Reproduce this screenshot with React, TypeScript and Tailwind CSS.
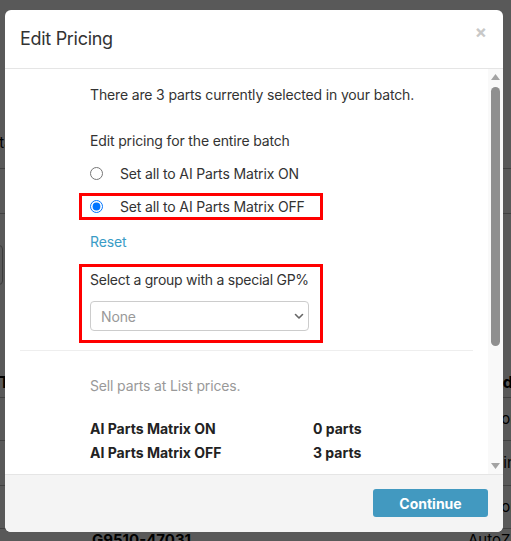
import React from "react";

const font = { fontFamily: "Inter, 'Noto Sans', sans-serif" };

function Background() {
  return (
    <div className="absolute inset-0 bg-white text-black" style={font}>
      <div className="h-[132px]" />
      <div className="h-[24px] text-[15px] -ml-[62px]">Show data</div>
      <div className="h-[12px]" />
      <div className="border-t border-[#bbb] h-[45px]" />
      <div className="border-t border-[#bbb] h-[32px]" />
      <div className="h-[40px] w-[60px] -ml-[57px] border border-[#aaa] rounded" />
      <div className="h-[81px]" />
      <div className="flex h-[31px] items-center font-bold text-[16px] whitespace-nowrap">
        <div className="-ml-[1px] w-[482px] shrink-0">Title</div>
        <div className="shrink-0">Code</div>
      </div>
      <div className="border-t border-[#bbb] h-[43px] flex items-center text-[15px] whitespace-nowrap">
        <div className="ml-[493px] shrink-0">Ford</div>
      </div>
      <div className="border-t border-[#bbb] h-[45px] flex items-center text-[15px] whitespace-nowrap">
        <div className="ml-[493px] shrink-0">Kinetic</div>
      </div>
      <div className="border-t border-[#bbb] h-[43px] flex items-center text-[15px] whitespace-nowrap">
        <div className="ml-[493px] shrink-0">Ford</div>
      </div>
      <div className="border-t border-[#bbb] h-[43px] flex items-start text-[15px] whitespace-nowrap">
        <div className="ml-[92px] font-bold w-[376px] shrink-0 leading-[20px] mt-[1px]">G9510-47031</div>
        <div className="leading-[20px] mt-[1px] shrink-0">AutoZone</div>
      </div>
    </div>
  );
}

function Chevron() {
  return (
    <svg width="10" height="7" viewBox="0 0 10 7" fill="none">
      <path d="M1.5 1.5 L5 5 L8.5 1.5" stroke="#666" strokeWidth="1.6" strokeLinecap="round" strokeLinejoin="round" />
    </svg>
  );
}

function Scrollbar() {
  return (
    <div className="w-[15px] shrink-0 bg-[#f9f9f9] flex flex-col items-center">
      <div className="h-[16px] flex items-center justify-center">
        <svg width="9" height="6" viewBox="0 0 9 6"><path d="M0 6 L4.5 0 L9 6 Z" fill="#a3a3a3" /></svg>
      </div>
      <div className="mt-[2px] w-[9px] h-[259px] rounded-full bg-[#8f8f8f]" />
      <div className="flex-1" />
      <div className="h-[16px] flex items-center justify-center">
        <svg width="9" height="6" viewBox="0 0 9 6"><path d="M0 0 L9 0 L4.5 6 Z" fill="#a3a3a3" /></svg>
      </div>
    </div>
  );
}

export default function App() {
  return (
    <div className="relative w-[511px] h-[541px] overflow-hidden" style={font}>
      <Background />
      <div className="absolute inset-0 bg-black/65" />
      <div className="absolute left-[5px] top-[10px] w-[498px] h-[522px] bg-white rounded-[6px] flex flex-col overflow-hidden text-[#333]">
        <div className="h-[59px] shrink-0 border-b border-[#e5e5e5] flex items-start justify-between pl-[15px] pr-[16px]">
          <div className="text-[18px] mt-[15px] text-[#333] tracking-[-0.3px]">Edit Pricing</div>
          <div className="mt-[13px] text-[#c8c8c8] text-[18px] font-bold leading-none">×</div>
        </div>
        <div className="flex-1 flex min-h-0">
          <div className="flex-1 overflow-hidden text-[14px]">
            <div className="px-[15px]">
              <div className="pl-[70px] pt-[16px] tracking-[-0.15px]">
                <div className="h-[20px] leading-[20px]">There are 3 parts currently selected in your batch.</div>
                <div className="h-[26px]" />
                <div className="h-[20px] leading-[20px]">Edit pricing for the entire batch</div>
                <div className="h-[22px] mt-[11px] flex items-center gap-[17px]">
                  <input type="radio" name="m" className="m-0 w-[13px] h-[13px]" />
                  <span>Set all to AI Parts Matrix ON</span>
                </div>
                <div className="mt-[9px] -ml-[11px] w-[244px] h-[27px] border-[3px] border-[#ff0000] flex items-center gap-[17px] pl-[8px]">
                  <input type="radio" name="m" defaultChecked className="m-0 w-[13px] h-[13px]" />
                  <span>Set all to AI Parts Matrix OFF</span>
                </div>
                <div className="mt-[12px] h-[20px] leading-[20px] text-[#3a9cc6]">Reset</div>
                <div className="mt-[12px] -ml-[11px] w-[244px] h-[79px] border-[3px] border-[#ff0000] pl-[8px] pt-[3px]">
                  <div className="h-[20px] leading-[20px] tracking-[-0.25px]">Select a group with a special GP%</div>
                  <div className="mt-[11px] w-[219px] h-[30px] border border-[#ccc] rounded-[4px] flex items-center justify-between pl-[10px] pr-[4px] text-[#999]">
                    <span>None</span>
                    <Chevron />
                  </div>
                </div>
              </div>
              <div className="mt-[7px] border-t border-[#eee]" />
              <div className="pl-[70px] pt-[25px] pb-[200px]">
                <div className="h-[20px] leading-[20px] text-[#999] tracking-[-0.15px]">Sell parts at List prices.</div>
                <div className="h-[20px]" />
                <div className="flex h-[24px] items-center font-bold text-[#222]">
                  <div className="w-[223px]">AI Parts Matrix ON</div>
                  <div>0 parts</div>
                </div>
                <div className="flex h-[24px] items-center font-bold text-[#222]">
                  <div className="w-[223px]">AI Parts Matrix OFF</div>
                  <div>3 parts</div>
                </div>
              </div>
            </div>
          </div>
          <Scrollbar />
        </div>
        <div className="h-[58px] shrink-0 border-t border-[#e5e5e5] bg-[#f4f4f4] flex items-start justify-end pr-[15px] pt-[14px]">
          <button className="w-[115px] h-[28px] rounded-[3px] bg-[#4299c0] text-white font-bold text-[14px]">Continue</button>
        </div>
      </div>
    </div>
  );
}
